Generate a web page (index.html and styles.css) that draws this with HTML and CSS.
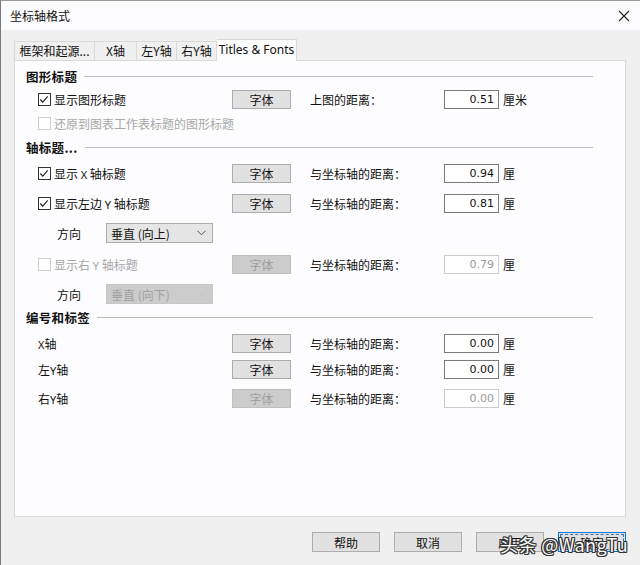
FILE: index.html
```html
<!DOCTYPE html>
<html lang="zh">
<head>
<meta charset="utf-8">
<title>坐标轴格式</title>
<link rel="stylesheet" href="styles.css">
</head>
<body>
<div class="window">
  <div class="titlebar">
    <span class="title">坐标轴格式</span>
    <svg class="close" width="12" height="12" viewBox="0 0 12 12"><path d="M1 1 L11 11 M11 1 L1 11" stroke="#222" stroke-width="1.1" fill="none"/></svg>
  </div>
  <div class="body">
    <div class="tabs">
      <div class="tab t1">框架和起源...</div>
      <div class="tab t2">X轴</div>
      <div class="tab t3">左Y轴</div>
      <div class="tab t3">右Y轴</div>
      <div class="tab active">Titles &amp; Fonts</div>
    </div>
    <div class="panel">
      <div class="header h1"><span class="htext">图形标题</span><span class="hline"></span></div>
      <div class="row r-a">
        <div class="lead"><span class="cb checked"><svg width="13" height="13" viewBox="0 0 13 13"><path d="M2.5 6.5 L5.2 9.3 L10.5 3.2" stroke="#222" stroke-width="1.2" fill="none"/></svg></span><span class="ltext">显示图形标题</span></div>
        <div class="btn">字体</div>
        <div class="dlabel">上图的距离：</div>
        <div class="num">0.51</div>
        <div class="unit">厘米</div>
      </div>
      <div class="row r-b disabled">
        <div class="lead"><span class="cb"></span><span class="ltext">还原到图表工作表标题的图形标题</span></div>
      </div>

      <div class="header h2"><span class="htext">轴标题...</span><span class="hline"></span></div>
      <div class="row r-c">
        <div class="lead"><span class="cb checked"><svg width="13" height="13" viewBox="0 0 13 13"><path d="M2.5 6.5 L5.2 9.3 L10.5 3.2" stroke="#222" stroke-width="1.2" fill="none"/></svg></span><span class="ltext">显示 <span class="lat">X</span> 轴标题</span></div>
        <div class="btn">字体</div>
        <div class="dlabel">与坐标轴的距离：</div>
        <div class="num">0.94</div>
        <div class="unit">厘</div>
      </div>
      <div class="row r-d">
        <div class="lead"><span class="cb checked"><svg width="13" height="13" viewBox="0 0 13 13"><path d="M2.5 6.5 L5.2 9.3 L10.5 3.2" stroke="#222" stroke-width="1.2" fill="none"/></svg></span><span class="ltext">显示左边 <span class="lat">Y</span> 轴标题</span></div>
        <div class="btn">字体</div>
        <div class="dlabel">与坐标轴的距离：</div>
        <div class="num">0.81</div>
        <div class="unit">厘</div>
      </div>
      <div class="row r-e">
        <div class="dirlabel">方向</div>
        <div class="select"><span>垂直 (向上)</span><svg width="9" height="6" viewBox="0 0 9 6"><path d="M0.5 0.8 L4.5 4.8 L8.5 0.8" stroke="#555" stroke-width="1" fill="none"/></svg></div>
      </div>
      <div class="row r-f">
        <div class="lead disabled"><span class="cb"></span><span class="ltext">显示右 <span class="lat">Y</span> 轴标题</span></div>
        <div class="btn off">字体</div>
        <div class="dlabel">与坐标轴的距离：</div>
        <div class="num off">0.79</div>
        <div class="unit">厘</div>
      </div>
      <div class="row r-g">
        <div class="dirlabel">方向</div>
        <div class="select off"><span>垂直 (向下)</span><svg width="9" height="6" viewBox="0 0 9 6"><path d="M0.5 0.8 L4.5 4.8 L8.5 0.8" stroke="#c4c4c4" stroke-width="1" fill="none"/></svg></div>
      </div>

      <div class="header h3"><span class="htext">编号和标签</span><span class="hline"></span></div>
      <div class="row r-h">
        <div class="lead"><span class="ltext"><span class="lat">X</span>轴</span></div>
        <div class="btn">字体</div>
        <div class="dlabel">与坐标轴的距离：</div>
        <div class="num">0.00</div>
        <div class="unit">厘</div>
      </div>
      <div class="row r-i">
        <div class="lead"><span class="ltext">左<span class="lat">Y</span>轴</span></div>
        <div class="btn">字体</div>
        <div class="dlabel">与坐标轴的距离：</div>
        <div class="num">0.00</div>
        <div class="unit">厘</div>
      </div>
      <div class="row r-j">
        <div class="lead"><span class="ltext">右<span class="lat">Y</span>轴</span></div>
        <div class="btn off">字体</div>
        <div class="dlabel">与坐标轴的距离：</div>
        <div class="num off">0.00</div>
        <div class="unit">厘</div>
      </div>
    </div>
    <div class="footer">
      <div class="fbtn">帮助</div>
      <div class="fbtn">取消</div>
      <div class="fbtn">应用</div>
      <div class="fbtn focus">确定</div>
    </div>
  </div>
  <div class="watermark">头条 @WangTu</div>
</div>
</body>
</html>
```

FILE: styles.css
```css
* { box-sizing: border-box; }
html, body { margin: 0; padding: 0; }
body {
  width: 640px;
  height: 565px;
  overflow: hidden;
  background: #f0f0f0;
  font-family: "Noto Sans CJK SC", "Noto Sans", sans-serif;
  font-size: 12px;
  color: #111;
}
.window {
  position: relative;
  width: 640px;
  height: 565px;
  border-left: 1px solid #7a7a7a;
  border-top: 1px solid #9a9a9a;
  background: #f0f0f0;
}
.titlebar {
  height: 29px;
  background: #fcfbfd;
  display: flex;
  align-items: center;
  justify-content: space-between;
  padding: 0 10px 0 9px;
}
.title { font-size: 12px; color: #111; }
.body {
  padding: 9px 13px 0 13px;
}
.tabs {
  display: flex;
  align-items: flex-end;
  height: 21px;
  position: relative;
  z-index: 1;
}
.tab {
  height: 19px;
  border: 1px solid #d9d9d9;
  border-left: none;
  border-bottom: none;
  background: #f0f0f0;
  display: flex;
  align-items: center;
  justify-content: center;
  font-size: 12px;
  line-height: 1;
}
.t1 { width: 81px; border-left: 1px solid #d9d9d9; }
.t2 { width: 42px; }
.t3 { width: 40px; }
.tab.active {
  width: 80px;
  height: 22px;
  margin-bottom: -1px;
  background: #fdfdfd;
  font-family: "Noto Sans", "Open Sans", sans-serif;
  padding-bottom: 2px;
}
.panel {
  width: 612px;
  height: 457px;
  border: 1px solid #d9d9d9;
  background: #fdfcfe;
  padding: 0 0 0 11px;
}
.header {
  display: flex;
  align-items: center;
  height: 20px;
  margin-right: 32px;
}
.htext {
  font-weight: bold;
  font-size: 12.5px;
  letter-spacing: 0.3px;
}
.hline {
  flex: 1;
  height: 1px;
  background: #bdbdbd;
  margin-left: 7px;
}
.h1 { margin-top: 5px; }
.h2 { margin-top: 4px; }
.h3 { margin-top: 3px; }
.row {
  display: flex;
  align-items: center;
  height: 20px;
  margin-left: 12px;
}
.r-a { margin-top: 3px; }
.r-b { margin-top: 4px; }
.r-c { margin-top: 6px; }
.r-d { margin-top: 10px; }
.r-e { margin-top: 10px; }
.r-f { margin-top: 11px; }
.r-g { margin-top: 10px; }
.r-h { margin-top: 6px; }
.r-i { margin-top: 6px; }
.r-j { margin-top: 9px; }
.lead {
  width: 194px;
  display: flex;
  align-items: center;
  white-space: nowrap;
}
.ltext { white-space: pre; }
.lat {
  font-family: "Noto Sans", sans-serif;
  font-size: 11px;
}
.cb {
  width: 13px;
  height: 13px;
  border: 1px solid #333;
  margin-right: 3px;
  display: inline-flex;
  background: #fff;
  flex: none;
}
.cb svg { margin: -1px 0 0 -1px; }
.disabled, .disabled .lead { color: #a8a8a8; }
.disabled .cb { border-color: #cfcfcf; }
.btn {
  width: 59px;
  height: 19px;
  background: #e1e1e1;
  border: 1px solid #adadad;
  display: flex;
  align-items: center;
  justify-content: center;
  flex: none;
}
.btn.off {
  background: #cccccc;
  border-color: #bfbfbf;
  color: #9e9e9e;
}
.dlabel {
  margin-left: 19px;
  width: 134px;
  white-space: nowrap;
}
.num {
  width: 55px;
  height: 19px;
  border: 1px solid #7a7a7a;
  background: #fff;
  font-family: "DejaVu Sans", "Noto Sans", sans-serif;
  font-size: 11px;
  text-align: right;
  padding: 1px 4px 0 0;
  line-height: 16px;
  flex: none;
}
.num.off {
  border-color: #cccccc;
  color: #9a9a9a;
}
.unit { margin-left: 4px; }
.r-e, .r-g { margin-left: 31px; }
.dirlabel {
  width: 37px;
  margin-right: 12px;
}
.select {
  width: 107px;
  height: 20px;
  border: 1px solid #adadad;
  background: #e5e5e5;
  display: flex;
  align-items: center;
  justify-content: space-between;
  padding: 0 6px 0 4px;
}
.select.off {
  background: #cccccc;
  border-color: #c6c6c6;
  color: #a0a0a0;
}
.footer {
  display: flex;
  justify-content: flex-end;
  gap: 14px;
  margin-top: 15px;
  padding-right: 1px;
}
.fbtn {
  width: 68px;
  height: 20px;
  background: #e1e1e1;
  border: 1px solid #adadad;
  display: flex;
  align-items: center;
  justify-content: center;
}
.fbtn.focus {
  border: 1px solid #0078d7;
  outline: 1px dashed #3c6fb0;
  outline-offset: -3px;
}
.watermark {
  position: absolute;
  left: 499px;
  top: 530px;
  font-family: "Noto Sans CJK SC", "Noto Sans", sans-serif;
  font-size: 18px;
  color: #fafafa;
  letter-spacing: 0.4px;
  text-shadow: 1px 0 0 #333, -1px 0 0 #333, 0 1px 0 #333, 0 -1px 0 #333, 1px 1px 0 #333, -1px -1px 0 #333, 1px -1px 0 #333, -1px 1px 0 #333;
}
```
